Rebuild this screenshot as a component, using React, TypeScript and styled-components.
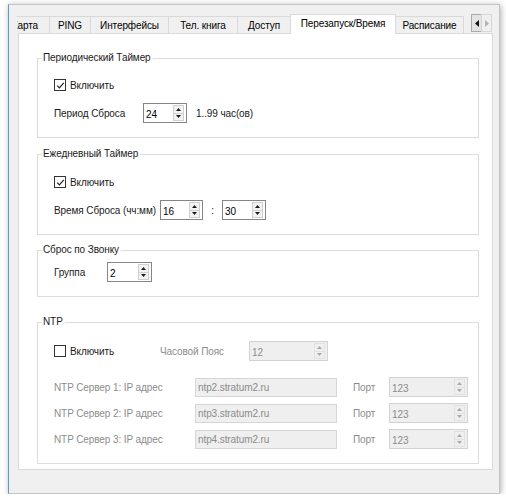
import React from 'react'
import styled, { createGlobalStyle } from 'styled-components'

const GlobalStyle = createGlobalStyle`
  html, body { margin: 0; padding: 0; background: #ffffff; }
  body {
    font-family: "Liberation Sans", Arial, sans-serif;
    font-size: 10px;
    letter-spacing: -0.1px;
    color: #000;
  }
`

const tabs = [
  { label: 'SIM Карта', w: 34, clipped: true },
  { label: 'PING', w: 42 },
  { label: 'Интерфейсы', w: 79 },
  { label: 'Тел. книга', w: 70 },
  { label: 'Доступ', w: 54 },
  { label: 'Перезапуск/Время', w: 106, active: true },
  { label: 'Расписание', w: 69 },
]

const servers = ['ntp2.stratum2.ru', 'ntp3.stratum2.ru', 'ntp4.stratum2.ru']

const Arrow = ({ down, disabled }: { down?: boolean; disabled?: boolean }) => (
  <svg width="5" height="3" viewBox="0 0 5 3">
    <path d={down ? 'M0 0 L5 0 L2.5 3 Z' : 'M0 3 L2.5 0 L5 3 Z'} fill={disabled ? '#a8a8a8' : '#1a1a1a'} />
  </svg>
)

const SpinBox = ({ value, w, disabled }: { value: string; w: number; disabled?: boolean }) => (
  <Spin $w={w} $disabled={disabled}>
    <SpinValue>{value}</SpinValue>
    <SpinButtons>
      <SpinButton $disabled={disabled}><Arrow disabled={disabled} /></SpinButton>
      <SpinButton $disabled={disabled}><Arrow down disabled={disabled} /></SpinButton>
    </SpinButtons>
  </Spin>
)

const CheckBox = ({ checked, label, w }: { checked?: boolean; label: string; w?: number }) => (
  <Check $w={w}>
    <Box>
      {checked && (
        <svg width="9" height="9" viewBox="0 0 9 9">
          <polyline points="1.2,4.6 3.4,6.9 7.8,1.8" fill="none" stroke="#222" strokeWidth="1.2" />
        </svg>
      )}
    </Box>
    {label}
  </Check>
)

const App = () => (
  <>
    <GlobalStyle />
    <Window>
      <TabBar>
        {tabs.map((t) => (
          <Tab key={t.label} $w={t.w} $active={t.active} $clipped={t.clipped}>{t.label}</Tab>
        ))}
        <Scroller>
          <ScrollButton>
            <svg width="4" height="7" viewBox="0 0 4 7"><path d="M4 0 L0 3.5 L4 7 Z" fill="#111" /></svg>
          </ScrollButton>
          <ScrollButton $disabled>
            <svg width="4" height="7" viewBox="0 0 4 7"><path d="M0 0 L4 3.5 L0 7 Z" fill="#b4b4b4" /></svg>
          </ScrollButton>
        </Scroller>
      </TabBar>

      <Panel>
        <Group>
          <Legend>Периодический Таймер</Legend>
          <Body $top={13} $gap={11}>
            <CheckBox checked label="Включить" />
            <Row>
              <Label $w={89}>Период Сброса</Label>
              <SpinBox value="24" w={44} />
              <Hint>1..99 час(ов)</Hint>
            </Row>
          </Body>
        </Group>

        <Group $mt={9}>
          <Legend>Ежедневный Таймер</Legend>
          <Body $top={14} $gap={11}>
            <CheckBox checked label="Включить" />
            <Row>
              <Label $w={106}>Время Сброса (чч:мм)</Label>
              <SpinBox value="16" w={43} />
              <Colon>:</Colon>
              <SpinBox value="30" w={44} />
            </Row>
          </Body>
        </Group>

        <Group $mt={8}>
          <Legend>Сброс по Звонку</Legend>
          <Body $top={5} $gap={0}>
            <Row>
              <Label $w={53}>Группа</Label>
              <SpinBox value="2" w={45} />
            </Row>
          </Body>
        </Group>

        <Group $mt={18}>
          <Legend>NTP</Legend>
          <Body $top={12} $gap={16}>
            <Row>
              <CheckBox label="Включить" w={106} />
              <Label $w={89} $muted>Часовой Пояс</Label>
              <SpinBox value="12" w={79} disabled />
            </Row>
            <ServerList>
              {servers.map((s, i) => (
                <Row key={s}>
                  <Label $w={141} $muted>NTP Сервер {i + 1}: IP адрес</Label>
                  <TextBox>{s}</TextBox>
                  <Label $w={36} $muted $ml={16}>Порт</Label>
                  <SpinBox value="123" w={79} disabled />
                </Row>
              ))}
            </ServerList>
          </Body>
        </Group>
      </Panel>
    </Window>
  </>
)

const Window = styled.div`
  box-sizing: border-box;
  width: 492px;
  height: 490px;
  margin: 4px 0 0 8px;
  padding: 9px 6px 0 9px;
  background: #f0f0f0;
  border: 1px solid #c4c4c4;
  border-left-color: #5b98d8;
  box-shadow: 1px 1px 6px rgba(0, 0, 0, 0.32);
`
const TabBar = styled.div`
  position: relative;
  z-index: 1;
  display: flex;
  align-items: flex-end;
  height: 20px;
  margin-left: -2px;
`
const Tab = styled.div<{ $w: number; $active?: boolean; $clipped?: boolean }>`
  box-sizing: border-box;
  flex: none;
  width: ${(p) => p.$w}px;
  height: ${(p) => (p.$active ? 20 : 17)}px;
  margin: 0 -1px ${(p) => (p.$active ? 0 : 1)}px 0;
  display: flex;
  align-items: center;
  justify-content: ${(p) => (p.$clipped ? 'flex-end' : 'center')};
  padding: ${(p) => (p.$clipped ? '0 11px 0 0' : '0')};
  padding-bottom: ${(p) => (p.$active ? 2 : 0)}px;
  overflow: hidden;
  white-space: nowrap;
  background: ${(p) => (p.$active ? '#ffffff' : '#f0f0f0')};
  border: 1px solid #d9d9d9;
  border-left-color: ${(p) => (p.$clipped ? 'transparent' : '#d9d9d9')};
  border-bottom: none;
  position: relative;
  z-index: ${(p) => (p.$active ? 2 : 1)};
`
const Scroller = styled.div`
  display: flex;
  align-self: flex-start;
  margin: 0 1px 0 auto;
`
const ScrollButton = styled.div<{ $disabled?: boolean }>`
  box-sizing: border-box;
  width: 11px;
  height: 18px;
  margin-left: -1px;
  display: flex;
  align-items: center;
  justify-content: center;
  background: ${(p) => (p.$disabled ? '#f0f0f0' : '#e3e3e3')};
  border: 1px solid ${(p) => (p.$disabled ? '#d6d6d6' : '#a9a9a9')};
`
const Panel = styled.div`
  box-sizing: border-box;
  height: 437px;
  margin-top: -1px;
  padding: 17px 13px 0 18px;
  display: flex;
  flex-direction: column;
  background: #ffffff;
  border: 1px solid #d9d9d9;
`
const Group = styled.fieldset<{ $mt?: number }>`
  margin: ${(p) => p.$mt || 0}px 0 0 0;
  padding: 0;
  min-width: 0;
  border: 1px solid #dcdcdc;
`
const Legend = styled.legend`
  margin-left: 4px;
  padding: 0 2px 0 1px;
  line-height: 14px;
  color: #1a1a1a;
`
const Body = styled.div<{ $top: number; $gap: number }>`
  display: flex;
  flex-direction: column;
  gap: ${(p) => p.$gap}px;
  padding: ${(p) => p.$top}px 0 14px 16px;
`
const ServerList = styled.div`
  display: flex;
  flex-direction: column;
  gap: 6px;
`
const Row = styled.div`
  display: flex;
  align-items: center;
  height: 20px;
`
const Label = styled.span<{ $w: number; $muted?: boolean; $ml?: number }>`
  flex: none;
  width: ${(p) => p.$w}px;
  margin-left: ${(p) => p.$ml || 0}px;
  color: ${(p) => (p.$muted ? '#8c8c8c' : '#1a1a1a')};
  white-space: nowrap;
`
const Hint = styled.span`
  margin-left: 9px;
  color: #1a1a1a;
`
const Colon = styled.span`
  width: 19px;
  text-align: center;
  color: #1a1a1a;
`
const Check = styled.label<{ $w?: number }>`
  display: flex;
  align-items: center;
  height: 14px;
  width: ${(p) => (p.$w ? `${p.$w}px` : 'auto')};
  flex: none;
  color: #1a1a1a;
`
const Box = styled.span`
  box-sizing: border-box;
  width: 12px;
  height: 12px;
  margin-right: 4px;
  display: flex;
  align-items: center;
  justify-content: center;
  background: #ffffff;
  border: 1px solid #333333;
`
const Spin = styled.div<{ $w: number; $disabled?: boolean }>`
  box-sizing: border-box;
  flex: none;
  width: ${(p) => p.$w}px;
  height: 20px;
  display: flex;
  background: ${(p) => (p.$disabled ? '#efefef' : '#ffffff')};
  border: 1px solid ${(p) => (p.$disabled ? '#d3d3d3' : '#858585')};
  color: ${(p) => (p.$disabled ? '#8c8c8c' : '#000000')};
`
const SpinValue = styled.span`
  flex: 1;
  padding: 2px 0 0 2px;
  line-height: 17px;
`
const SpinButtons = styled.div`
  display: flex;
  flex-direction: column;
  width: 11px;
  margin: 1px 2px 1px 0;
`
const SpinButton = styled.span<{ $disabled?: boolean }>`
  flex: 1;
  display: flex;
  align-items: center;
  justify-content: center;
  background: ${(p) => (p.$disabled ? '#efefef' : '#f3f3f3')};
  border: 1px solid ${(p) => (p.$disabled ? '#e2e2e2' : '#d0d0d0')};
  & + & { border-top: none; }
`
const TextBox = styled.div`
  box-sizing: border-box;
  flex: none;
  width: 142px;
  height: 19px;
  padding: 0 0 0 2px;
  line-height: 17px;
  background: #efefef;
  border: 1px solid #d6d6d6;
  color: #8c8c8c;
`

export default App
